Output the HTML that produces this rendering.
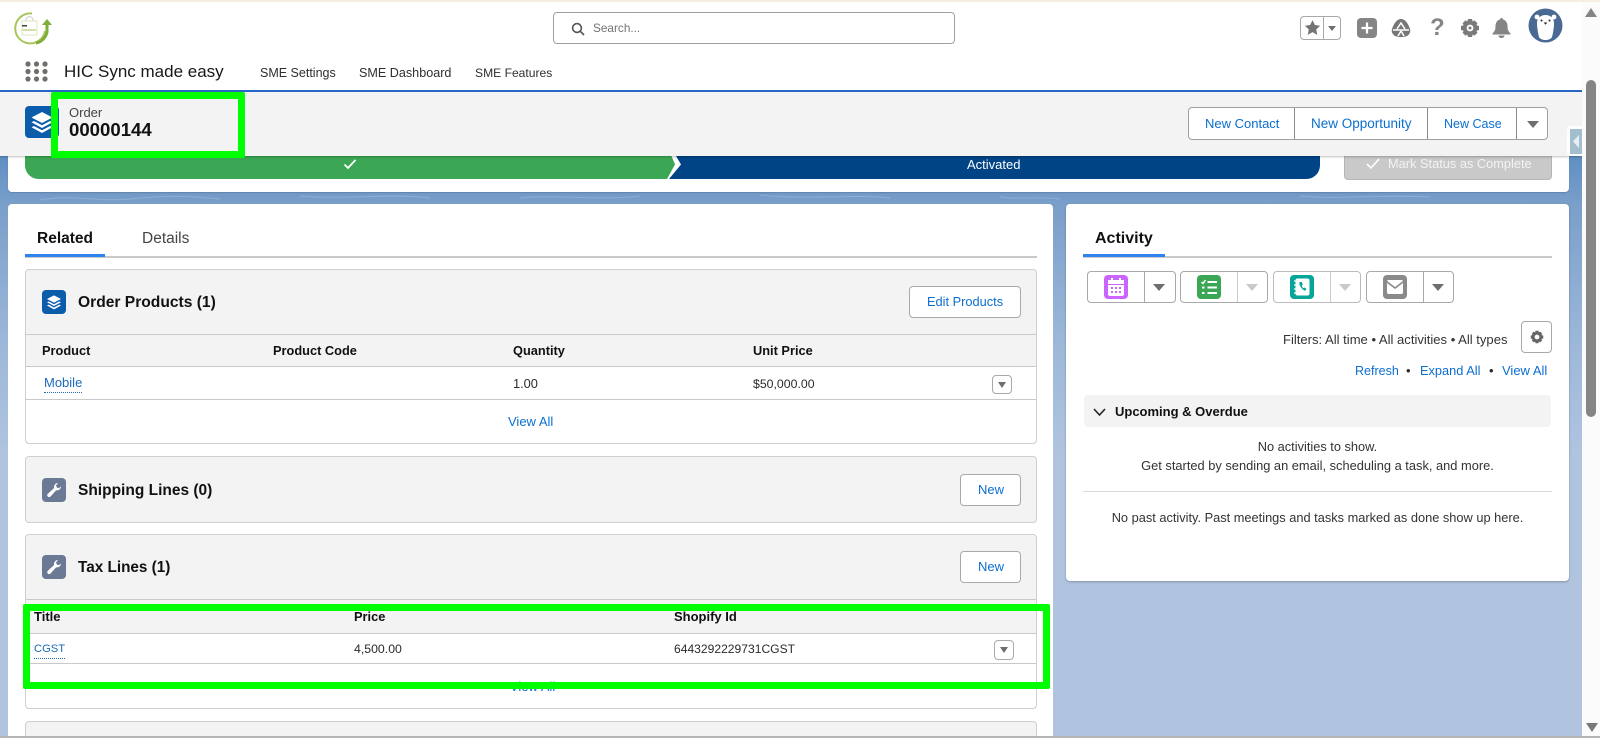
<!DOCTYPE html>
<html lang="en"><head><meta charset="utf-8"><title>Order 00000144</title>
<style>
*{box-sizing:border-box}
html,body{margin:0;padding:0;width:1600px;height:738px;overflow:hidden;background:#fff;font-family:"Liberation Sans",sans-serif;color:#181818}
#root{position:relative;width:1600px;height:738px;overflow:hidden;background:#fff}
.a{position:absolute}
.t{position:absolute;white-space:nowrap;line-height:20px;font-size:13px;color:#2b2b2b}
.b{font-weight:700;color:#111}
.h{font-weight:700;color:#111;font-size:15.5px}
.c{font-size:12.8px}
.l{color:#0b6fd0}
.box{position:absolute;border:1px solid #a9a9a9;border-radius:4px;background:#fff}
.tri{position:absolute;width:0;height:0;border-left:6px solid transparent;border-right:6px solid transparent;border-top:7px solid #706e6b}
.card{position:absolute;left:25px;width:1012px;border:1px solid #cfcfcf;border-radius:4px;background:#f3f3f3}
.ln{position:absolute;height:1px;background:#c9c9c9}
.ico{position:absolute;border-radius:4px}
svg{position:absolute;display:block}
</style></head><body>
<div id="root">
<div class="a" style="left:0;top:0;width:1600px;height:2px;background:#f4efdf"></div>

<!-- page background -->
<div class="a" style="left:0;top:156px;width:1582px;height:580px;background:linear-gradient(180deg,#5f8fc3 0,#7a9fca 50px,#9db8d9 190px,#b0c4df 300px,#b0c4df 100%)"></div>
<svg style="left:0;top:192px" width="1582" height="12" fill="none" stroke="#a9c2de" stroke-width="1" opacity=".5"><path d="M40 8c30-6 60 2 90-1s50-4 90 0M300 4c40 4 90-3 130 2M520 6c30-4 80 3 120-2M760 3c40 5 90-1 130 3M1000 5c20 3 40-1 60 2M1300 4c40 4 80-2 130 1"/></svg>

<!-- top bar -->
<svg style="left:14px;top:12px" width="38" height="33" viewBox="0 0 38 33" fill="none"><path d="M31 19A15 15 0 1 1 18 1.500" stroke="#a9c65a" stroke-width="2"/><path d="M33 12v8a14 14 0 0 1-11 11" stroke="#7fae3a" stroke-width="3"/><path d="M28 13l5-6 5 6z" fill="#7fae3a"/><path d="M8 9h15v14H8z" stroke="#dbe7bd" stroke-width="1"/><path d="M12 9c0-6 7-6 7 0" stroke="#cfcfcf" stroke-width="1"/><rect x="8" y="13" width="5" height="1.500" fill="#444"/><rect x="8" y="17" width="14" height="2" fill="#d3e2a8"/></svg>

<div class="box" style="left:553px;top:12px;width:402px;height:32px;border-color:#a0a0a0"></div>
<svg style="left:571px;top:22px" width="14" height="14" viewBox="0 0 14 14" fill="none" stroke="#555" stroke-width="1.600"><circle cx="6" cy="6" r="4.400"/><path d="M9.200 9.200L13 13"/></svg>
<span class="t" style="left:593px;top:18px;font-size:11.800px;color:#747474">Search...</span>

<div class="box" style="left:1300px;top:16px;width:41px;height:24px;border-color:#a9a9a9"></div>
<div class="a" style="left:1323px;top:16px;width:1px;height:24px;background:#a9a9a9"></div>
<svg style="left:1304px;top:19px" width="17" height="17" viewBox="0 0 16 16"><path d="M8 1l2.200 4.700 5 .6-3.700 3.500 1 5.100L8 12.400l-4.500 2.500 1-5.100L.8 6.300l5-.6z" fill="#747474"/></svg>
<div class="tri" style="left:1328px;top:26px;border-left-width:4.500px;border-right-width:4.500px;border-top-width:5px"></div>
<div class="ico" style="left:1357px;top:18px;width:20px;height:20px;background:#858585"></div>
<svg style="left:1357px;top:18px" width="20" height="20"><path d="M10 4.500v11M4.500 10h11" stroke="#fff" stroke-width="2.200"/></svg>
<svg style="left:1391px;top:18px" width="20" height="20" viewBox="0 0 20 20"><path d="M10 1C6 1 3 5 1 11c-1 3 1 6 3 7 4 1.500 8 1.500 12 0 2-1 4-4 3-7C17 5 14 1 10 1z" fill="#777"/><path d="M2 12h16M6 11l4-6 4 6M10 13l-3 5M10 13l3 5" stroke="#fff" stroke-width="1.500" fill="none"/></svg>
<span class="t" style="left:1430px;top:17px;font-size:24px;font-weight:700;color:#858585;line-height:22px">?</span>
<svg style="left:1460px;top:18px" width="20" height="20" viewBox="0 0 20 20"><path d="M8 1h4l.6 2.400 2-1 2.800 2.800-1 2 2.600.8v4l-2.600.8 1 2-2.800 2.800-2-1L12 19H8l-.6-2.400-2 1-2.800-2.800 1-2L1 12V8l2.600-.8-1-2 2.800-2.800 2 1z" fill="#7a7a7a"/><circle cx="10" cy="10" r="3.400" fill="#fff"/><circle cx="10" cy="10" r="1.500" fill="#7a7a7a"/></svg>
<svg style="left:1492px;top:18px" width="19" height="20" viewBox="0 0 19 20"><path d="M9.500 0c1 0 1.500.7 1.600 1.500C14 2.300 15.500 5 15.500 8c0 4 1 5.500 3 7.500v1H.5v-1c2-2 3-3.500 3-7.500 0-3 1.500-5.700 4.400-6.500C8 .7 8.500 0 9.500 0z" fill="#858585"/><path d="M6.500 17.500h6c0 1.500-1.300 2.500-3 2.500s-3-1-3-2.500z" fill="#858585"/></svg>
<svg style="left:1528px;top:8px" width="35" height="35" viewBox="0 0 35 35"><circle cx="17.500" cy="17.500" r="17" fill="#4b6a93"/><circle cx="9" cy="9" r="2.400" fill="#fff"/><circle cx="26" cy="9" r="2.400" fill="#fff"/><path d="M9 15c0-5 4-8 8.500-8s8.500 3 8.500 8c0 5-1 10-2 14-1 2-4 3-6.500 3s-5.500-1-6.500-3c-1-4-2-9-2-14z" fill="#fff"/><circle cx="13.500" cy="12.500" r="1" fill="#222"/><circle cx="21.500" cy="12.500" r="1" fill="#222"/><path d="M15.700 14.500h3.600l-1.800 2.200z" fill="#222"/></svg>

<!-- nav -->
<svg style="left:25px;top:61px" width="23" height="21" fill="#706e6b"><circle cx="3" cy="3" r="2.600"/><circle cx="11.500" cy="3" r="2.600"/><circle cx="20" cy="3" r="2.600"/><circle cx="3" cy="10.500" r="2.600"/><circle cx="11.500" cy="10.500" r="2.600"/><circle cx="20" cy="10.500" r="2.600"/><circle cx="3" cy="18" r="2.600"/><circle cx="11.500" cy="18" r="2.600"/><circle cx="20" cy="18" r="2.600"/></svg>
<span class="t" style="left:64px;top:62px;font-size:17px;color:#181818">HIC Sync made easy</span>
<span class="t" style="left:260px;top:63px;font-size:12.500px;color:#2e2e2e">SME Settings</span>
<span class="t" style="left:359px;top:63px;font-size:12.600px;color:#2e2e2e">SME Dashboard</span>
<span class="t" style="left:475px;top:63px;font-size:12.100px;color:#2e2e2e">SME Features</span>
<div class="a" style="left:0;top:90px;width:1582px;height:2px;background:#2a66c9"></div>

<!-- path card -->
<div class="a" style="left:8px;top:150px;width:1561px;height:42px;background:#fff;border-radius:0 0 4px 4px;box-shadow:0 1px 1px rgba(0,0,0,.15)"></div>
<svg style="left:25px;top:150px" width="1296" height="30"><path d="M0 0H644L650 14.500 642 29H14C6 29 0 23 0 15z" fill="#3ba755"/><path d="M651 6H1295V15C1295 23 1289 29 1281 29H644L656 14.500z" fill="#014486"/></svg>
<svg style="left:343px;top:158px" width="14" height="12" fill="none" stroke="#fff" stroke-width="1.800"><path d="M1.500 6.500l3.500 3.500 7.500-8"/></svg>
<span class="t" style="left:967px;top:155px;font-size:13px;color:#fff">Activated</span>
<div class="a" style="left:1344px;top:150px;width:208px;height:30px;background:#c9c9c9;border:1px solid #b5b5b5;border-radius:4px"></div>
<svg style="left:1366px;top:158px" width="14" height="12" fill="none" stroke="#fff" stroke-width="1.600"><path d="M1 6l4 4 8-9"/></svg>
<span class="t" style="left:1388px;top:154px;font-size:12.800px;color:#f3f3f3">Mark Status as Complete</span>

<!-- highlights header -->
<div class="a" style="left:0;top:92px;width:1582px;height:64px;background:#f3f3f3;box-shadow:0 1px 2px rgba(0,0,0,.25)"></div>
<div class="ico" style="left:25px;top:106px;width:34px;height:32px;background:#0b5cab"></div>
<svg style="left:30px;top:111px" width="24" height="22" viewBox="0 0 24 22" fill="#fff"><path d="M12 1L1.500 6.500 12 12l10.500-5.500z"/><path d="M4 10L1.500 11.300 12 17l10.500-5.700L20 10l-8 4.300z"/><path d="M4 15L1.500 16.300 12 22l10.500-5.700L20 15l-8 4.300z"/></svg>
<div class="a" style="left:51px;top:92px;width:194px;height:66px;border:7px solid #00ff00;border-radius:2px"></div>
<span class="t" style="left:69px;top:103px;font-size:13px;color:#444">Order</span>
<span class="t" style="left:69px;top:120px;font-size:18.600px;font-weight:700;color:#111">00000144</span>

<div class="box" style="left:1188px;top:107px;width:360px;height:33px;border-color:#a0a0a0;background:#fff"></div>
<div class="a" style="left:1294px;top:108px;width:1px;height:31px;background:#8a8a8a"></div>
<div class="a" style="left:1427px;top:108px;width:1px;height:31px;background:#8a8a8a"></div>
<div class="a" style="left:1516px;top:108px;width:1px;height:31px;background:#8a8a8a"></div>
<span class="t l" style="left:1205px;top:114px">New Contact</span>
<span class="t l" style="left:1311px;top:114px;font-size:13.500px">New Opportunity</span>
<span class="t l" style="left:1444px;top:114px;font-size:12.500px">New Case</span>
<div class="tri" style="left:1527px;top:121px"></div>
<div class="a" style="left:1567px;top:126px;width:15px;height:30px;background:#fff;border-radius:4px 0 0 4px"></div>
<div class="a" style="left:1570px;top:129px;width:12px;height:25px;background:#a3bfcf"></div>
<svg style="left:1572px;top:134px" width="8" height="15"><path d="M7 1v13L1 7.500z" fill="#e8eef2"/></svg>

<!-- related panel -->
<div class="a" style="left:8px;top:204px;width:1045px;height:534px;background:#fff;border-radius:4px 4px 0 0"></div>
<span class="t" style="left:37px;top:229px;font-size:15.500px;font-weight:700;color:#111">Related</span>
<span class="t" style="left:142px;top:229px;font-size:15.500px;color:#444">Details</span>
<div class="a" style="left:25px;top:256px;width:1012px;height:2px;background:#c9c9c9"></div>
<div class="a" style="left:25px;top:254px;width:80px;height:3px;background:#2e84ee"></div>

<!-- Order Products -->
<div class="card" style="top:269px;height:175px"></div>
<div class="a" style="left:26px;top:366px;width:1010px;height:77px;background:#fff;border-radius:0 0 4px 4px"></div>
<div class="ln" style="left:26px;top:334px;width:1010px"></div>
<div class="ln" style="left:26px;top:366px;width:1010px"></div>
<div class="ln" style="left:26px;top:399px;width:1010px"></div>
<div class="ico" style="left:42px;top:290px;width:24px;height:24px;background:#0b5cab"></div>
<svg style="left:46px;top:294px" width="16" height="16" viewBox="0 0 24 22" fill="#fff"><path d="M12 1L1.500 6.500 12 12l10.500-5.500z"/><path d="M4 10L1.500 11.300 12 17l10.500-5.700L20 10l-8 4.300z"/><path d="M4 15L1.500 16.300 12 22l10.500-5.700L20 15l-8 4.300z"/></svg>
<span class="t h" style="left:78px;top:293px;font-size:15.600px">Order Products (1)</span>
<div class="box" style="left:909px;top:286px;width:112px;height:32px"></div>
<span class="t l" style="left:927px;top:292px;font-size:12.800px">Edit Products</span>
<span class="t b c" style="left:42px;top:341px">Product</span>
<span class="t b c" style="left:273px;top:341px">Product Code</span>
<span class="t b c" style="left:513px;top:341px">Quantity</span>
<span class="t b c" style="left:753px;top:341px">Unit Price</span>
<span class="t" style="left:44px;top:373px;color:#1b6bb8;border-bottom:1px dotted #1b6bb8;line-height:19px">Mobile</span>
<span class="t c" style="left:513px;top:374px">1.00</span>
<span class="t" style="left:753px;top:374px;font-size:12.300px">$50,000.00</span>
<div class="box" style="left:992px;top:375px;width:20px;height:19px"></div>
<div class="tri" style="left:998px;top:382px;border-left-width:4px;border-right-width:4px;border-top-width:6px"></div>
<span class="t l" style="left:508px;top:412px">View All</span>

<!-- Shipping -->
<div class="card" style="top:456px;height:67px"></div>
<div class="ico" style="left:42px;top:478px;width:24px;height:24px;background:#6b7a94"></div>
<svg style="left:46px;top:482px" width="16" height="16" viewBox="0 0 16 16"><path d="M15 4.500c0 2.500-2.400 4.300-4.800 3.700L4.500 14.500c-.8.800-2 .8-2.700.1-.8-.8-.7-2 .1-2.800l6.200-5.800C7.500 3.500 9.500 1 12 1l-2 2.500.8 2 2 .8z" fill="#fff"/></svg>
<span class="t h" style="left:78px;top:481px;font-size:15.500px">Shipping Lines (0)</span>
<div class="box" style="left:960px;top:474px;width:61px;height:32px"></div>
<span class="t l" style="left:978px;top:480px">New</span>

<!-- Tax -->
<div class="card" style="top:534px;height:175px"></div>
<div class="a" style="left:26px;top:633px;width:1010px;height:75px;background:#fff;border-radius:0 0 4px 4px"></div>
<div class="ln" style="left:26px;top:599px;width:1010px"></div>
<div class="ln" style="left:26px;top:633px;width:1010px;height:1px"></div>
<div class="ln" style="left:26px;top:663px;width:1010px"></div>
<div class="ico" style="left:42px;top:555px;width:24px;height:24px;background:#6b7a94"></div>
<svg style="left:46px;top:559px" width="16" height="16" viewBox="0 0 16 16"><path d="M15 4.500c0 2.500-2.400 4.300-4.800 3.700L4.500 14.500c-.8.800-2 .8-2.700.1-.8-.8-.7-2 .1-2.800l6.200-5.800C7.500 3.500 9.500 1 12 1l-2 2.500.8 2 2 .8z" fill="#fff"/></svg>
<span class="t h" style="left:78px;top:558px;font-size:15.300px">Tax Lines (1)</span>
<div class="box" style="left:960px;top:551px;width:61px;height:32px"></div>
<span class="t l" style="left:978px;top:557px">New</span>
<span class="t b" style="left:34px;top:607px">Title</span>
<span class="t b" style="left:354px;top:607px;font-size:12.800px">Price</span>
<span class="t b" style="left:674px;top:607px">Shopify Id</span>
<span class="t" style="left:34px;top:640px;color:#1b6bb8;border-bottom:1px dotted #1b6bb8;line-height:18px;font-size:11.200px">CGST</span>
<span class="t" style="left:354px;top:639px;font-size:12.300px">4,500.00</span>
<span class="t" style="left:674px;top:639px;font-size:12.100px">6443292229731CGST</span>
<div class="box" style="left:994px;top:640px;width:20px;height:20px"></div>
<div class="tri" style="left:1000px;top:647px;border-left-width:4px;border-right-width:4px;border-top-width:6px"></div>
<span class="t l" style="left:510px;top:677px">View All</span>
<div class="a" style="left:23px;top:604px;width:1027px;height:85px;border:7px solid #00ff00;border-radius:2px"></div>

<div class="card" style="top:721px;height:24px"></div>

<!-- activity panel -->
<div class="a" style="left:1066px;top:204px;width:503px;height:377px;background:#fff;border-radius:4px;box-shadow:0 1px 2px rgba(0,0,0,.25)"></div>
<span class="t" style="left:1095px;top:229px;font-size:16px;font-weight:700;color:#111">Activity</span>
<div class="a" style="left:1083px;top:256px;width:469px;height:2px;background:#c9c9c9"></div>
<div class="a" style="left:1083px;top:254px;width:82px;height:3px;background:#2e84ee"></div>

<div class="box" style="left:1087px;top:271px;width:89px;height:32px"></div>
<div class="a" style="left:1144px;top:272px;width:1px;height:30px;background:#a9a9a9"></div>
<div class="ico" style="left:1104px;top:275px;width:24px;height:24px;background:#cb65ff"></div>
<svg style="left:1108px;top:278px" width="16" height="18" viewBox="0 0 16 18" fill="#fff"><path d="M3 0h2v2h6V0h2v2h3v4H0V2h3z"/><path fill-rule="evenodd" d="M0 7h16v9a2 2 0 0 1-2 2H2a2 2 0 0 1-2-2zM3 9v2h2V9zm4 0v2h2V9zm4 0v2h2V9zM3 13v2h2v-2zm4 0v2h2v-2zm4 0v2h2v-2z"/></svg>
<div class="tri" style="left:1153px;top:284px;border-top-color:#706e6b"></div>

<div class="box" style="left:1180px;top:271px;width:88px;height:32px"></div>
<div class="a" style="left:1237px;top:272px;width:1px;height:30px;background:#c9c9c9"></div>
<div class="ico" style="left:1197px;top:275px;width:24px;height:24px;background:#3ba755"></div>
<svg style="left:1201px;top:279px" width="16" height="16" viewBox="0 0 16 16" fill="none" stroke="#fff" stroke-width="2"><path d="M6.500 3H16M6.500 8.500H16M6.500 14H16"/><path d="M.5 3l1.500 1.500L4.500 1" stroke-width="1.500"/><path d="M1 8.500h2.500M1 14h2.500"/></svg>
<div class="tri" style="left:1246px;top:284px;border-top-color:#c9c9c9"></div>

<div class="box" style="left:1273px;top:271px;width:88px;height:32px;border-color:#bbb"></div>
<div class="a" style="left:1330px;top:272px;width:1px;height:30px;background:#c9c9c9"></div>
<div class="ico" style="left:1290px;top:275px;width:24px;height:24px;background:#06a59a"></div>
<svg style="left:1294px;top:278px" width="16" height="18" viewBox="0 0 16 18"><rect x="1.500" y="0.500" width="14" height="17" rx="2" fill="#fff"/><path d="M0 3h3M0 7h3M0 11h3M0 15h3" stroke="#fff" stroke-width="1.300"/><path d="M6 4c-1 .5-1 2 .5 4.500S10 13 11.500 12.500l1-1.500-2-1.500-1 .8C9 10 8 8.500 7.800 7.500l1-.8L7.800 4z" fill="#06a59a"/></svg>
<div class="tri" style="left:1339px;top:284px;border-top-color:#c9c9c9"></div>

<div class="box" style="left:1366px;top:271px;width:88px;height:32px"></div>
<div class="a" style="left:1423px;top:272px;width:1px;height:30px;background:#a9a9a9"></div>
<div class="ico" style="left:1383px;top:275px;width:24px;height:24px;background:#8a8a8a"></div>
<svg style="left:1387px;top:280px" width="16" height="14" viewBox="0 0 16 14" fill="#fff"><path d="M1.500 0h13c.7 0 1.300.4 1.400 1L8 7 .1 1C.2.400.8 0 1.500 0z"/><path d="M0 3l8 6 8-6v9.500c0 .8-.7 1.500-1.500 1.500h-13C.7 14 0 13.300 0 12.500z"/></svg>
<div class="tri" style="left:1432px;top:284px"></div>

<span class="t" style="left:1283px;top:330px;font-size:13.050px;color:#333">Filters: All time • All activities • All types</span>
<div class="box" style="left:1521px;top:321px;width:31px;height:32px"></div>
<svg style="left:1530px;top:330px" width="14" height="14" viewBox="0 0 20 20"><path d="M8 1h4l.6 2.400 2-1 2.800 2.800-1 2 2.600.8v4l-2.600.8 1 2-2.800 2.800-2-1L12 19H8l-.6-2.400-2 1-2.800-2.800 1-2L1 12V8l2.600-.8-1-2 2.800-2.800 2 1z" fill="#666"/><circle cx="10" cy="10" r="3.400" fill="#fff"/></svg>
<span class="t l" style="left:1355px;top:361px;font-size:12.500px">Refresh</span>
<span class="t" style="left:1406px;top:361px">•</span>
<span class="t l" style="left:1420px;top:361px;font-size:12.800px">Expand All</span>
<span class="t" style="left:1489px;top:361px">•</span>
<span class="t l" style="left:1502px;top:361px">View All</span>

<div class="a" style="left:1084px;top:395px;width:467px;height:32px;background:#f3f3f3;border-radius:4px"></div>
<svg style="left:1093px;top:408px" width="14" height="9" fill="none" stroke="#222" stroke-width="1.600"><path d="M1 1l5.500 6L12 1"/></svg>
<span class="t b" style="left:1115px;top:402px">Upcoming &amp; Overdue</span>
<span class="t" style="left:1084px;top:437px;width:467px;text-align:center;color:#333;font-size:12.800px">No activities to show.</span>
<span class="t" style="left:1084px;top:456px;width:467px;text-align:center;color:#333;font-size:12.850px">Get started by sending an email, scheduling a task, and more.</span>
<div class="a" style="left:1083px;top:491px;width:469px;height:1px;background:#d8d8d8"></div>
<span class="t" style="left:1084px;top:508px;width:467px;text-align:center;color:#333;font-size:12.800px">No past activity. Past meetings and tasks marked as done show up here.</span>

<!-- scrollbar -->
<div class="a" style="left:1582px;top:2px;width:18px;height:734px;background:#fbfbfb"></div>
<svg style="left:1584px;top:7px" width="14" height="11"><path d="M7 1l6 9H1z" fill="#858585"/></svg>
<div class="a" style="left:1586px;top:80px;width:10px;height:337px;background:#858585;border-radius:5px"></div>
<svg style="left:1585px;top:722px" width="14" height="11"><path d="M1 1h12L7 10z" fill="#777"/></svg>
<div class="a" style="left:0;top:736px;width:1600px;height:2px;background:#b5b5b5"></div>
</div>
</body></html>
